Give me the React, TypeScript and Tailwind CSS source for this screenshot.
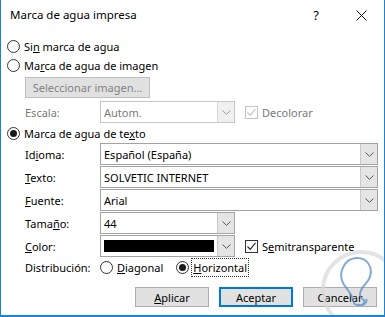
import type { ReactNode } from 'react';

const font = "font-['Noto_Sans',sans-serif]";

function Radio({ checked }: { checked?: boolean }) {
  return (
    <span className="flex h-[13px] w-[13px] shrink-0 items-center justify-center rounded-full border border-[#333] bg-white">
      {checked && <span className="h-[7px] w-[7px] rounded-full bg-[#1a1a1a]" />}
    </span>
  );
}

function Check({ disabled }: { disabled?: boolean }) {
  return (
    <span className={`flex h-[13px] w-[13px] shrink-0 items-center justify-center border bg-white ${disabled ? 'border-[#c4c4c4]' : 'border-[#333]'}`}>
      <svg width="11" height="11" viewBox="0 0 11 11">
        <path d="M1.5 5.5 L4.2 8.3 L9.5 1.8" fill="none" stroke={disabled ? '#c4c4c4' : '#222'} strokeWidth="1.1" />
      </svg>
    </span>
  );
}

function Chevron({ disabled }: { disabled?: boolean }) {
  return (
    <svg width="9" height="5" viewBox="0 0 9 5">
      <path d="M0.5 0.5 L4.5 4.3 L8.5 0.5" fill="none" stroke={disabled ? '#9a9a9a' : '#555'} strokeWidth="1" />
    </svg>
  );
}

function Combo({ w, disabled, children }: { w: string; disabled?: boolean; children: ReactNode }) {
  return (
    <div className={`flex h-[22px] shrink-0 border bg-white ${w} ${disabled ? 'border-[#c6c6c6] text-[#7a7a7a]' : 'border-[#a3a3a3]'}`}>
      <div className="flex min-w-0 flex-1 items-center px-[3px]">{children}</div>
      <div className={`flex w-[17px] items-center justify-center border-l ${disabled ? 'border-[#d6d6d6] bg-[#f0f0f0]' : 'border-[#c9c9c9] bg-[#e5e5e5]'}`}>
        <Chevron disabled={disabled} />
      </div>
    </div>
  );
}

function Field({ label, children }: { label: ReactNode; children: ReactNode }) {
  return (
    <div className="flex h-[22px] items-center pl-[24px]">
      <span className="w-[75px] shrink-0">{label}</span>
      {children}
    </div>
  );
}

function Btn({ children, primary }: { children: ReactNode; primary?: boolean }) {
  return (
    <button className={`flex h-[20px] w-[74px] items-center justify-center bg-[#e1e1e1] ${primary ? 'border-2 border-[#0078d7]' : 'border border-[#adadad]'}`}>
      {children}
    </button>
  );
}

export default function App() {
  return (
    <div className={`relative flex h-[317px] w-[385px] flex-col overflow-hidden border-x border-b-2 border-[#1883d7] bg-white text-[11px] leading-none text-black ${font}`}>
      {/* title bar */}
      <div className="flex h-[30px] shrink-0 items-center pl-[9px]">
        <span className="flex-1 text-[11.5px]">Marca de agua impresa</span>
        <span className="mr-[37px] text-[13px]">?</span>
        <svg className="mr-[17px]" width="11" height="11" viewBox="0 0 11 11">
          <path d="M0.5 0.5 L10.5 10.5 M10.5 0.5 L0.5 10.5" stroke="#111" strokeWidth="1" />
        </svg>
      </div>

      <div className="mt-[7px] flex h-[19px] items-center gap-[4px] pl-[6px]">
        <Radio />
        <span>Si<u>n</u> marca de agua</span>
      </div>
      <div className="flex h-[19px] items-center gap-[4px] pl-[6px]">
        <Radio />
        <span>Ma<u>r</u>ca de agua de imagen</span>
      </div>

      <div className="mt-[2px] pl-[24px]">
        <div className="flex h-[21px] w-[125px] items-center justify-center border border-[#bfbfbf] bg-[#e1e1e1] text-[#838383]">
          Seleccionar imagen...
        </div>
      </div>

      <div className="mt-[3px] flex h-[22px] items-center pl-[24px]">
        <span className="w-[75px] shrink-0 text-[#7a7a7a]">Escala:</span>
        <Combo w="w-[135px]" disabled>Autom.</Combo>
        <div className="ml-[10px] flex items-center gap-[4px] text-[#7a7a7a]">
          <Check disabled />
          <span>Decolorar</span>
        </div>
      </div>

      <div className="flex h-[20px] items-center gap-[4px] pl-[6px]">
        <Radio checked />
        <span>Marca de agua de te<u>x</u>to</span>
      </div>

      <div className="flex flex-col gap-[1px]">
        <Field label={<>Id<u>i</u>oma:</>}>
          <Combo w="w-[278px]">Español (España)</Combo>
        </Field>
        <Field label={<><u>T</u>exto:</>}>
          <Combo w="w-[278px]">SOLVETIC INTERNET</Combo>
        </Field>
        <Field label={<><u>F</u>uente:</>}>
          <Combo w="w-[278px]">Arial</Combo>
        </Field>
        <Field label={<>Tama<u>ñ</u>o:</>}>
          <Combo w="w-[135px]">44</Combo>
        </Field>
        <Field label={<><u>C</u>olor:</>}>
          <Combo w="w-[135px]">
            <span className="h-[12px] w-[110px] bg-black" />
          </Combo>
          <div className="ml-[10px] flex items-center gap-[4px]">
            <Check />
            <span>S<u>e</u>mitransparente</span>
          </div>
        </Field>
      </div>

      <div className="mt-[1px] flex h-[19px] items-center pl-[24px]">
        <span className="w-[75px] shrink-0">Distribución:</span>
        <Radio />
        <span className="ml-[4px]"><u>D</u>iagonal</span>
        <span className="ml-[13px]"><Radio checked /></span>
        <span className="ml-[2px] border border-dotted border-[#333] px-[1px] py-[3px]"><u>H</u>orizontal</span>
      </div>

      <div className="mt-[10px] flex justify-end gap-[10px] pr-[7px]">
        <Btn><span><u>A</u>plicar</span></Btn>
        <Btn primary>Aceptar</Btn>
        <Btn>Cancelar</Btn>
      </div>

      {/* site watermark */}
      <svg className="pointer-events-none absolute left-[315px] top-[245px]" width="80" height="80" viewBox="0 0 80 80">
        <circle cx="45" cy="45" r="38" fill="none" stroke="#d9d9d9" strokeWidth="4" opacity="0.7" />
        <path
          d="M37 56 C36 48 30 44 27 38 C22 28 28 14 40 13 C52 12 58 24 53 34 C50 40 44 42 44 50 C44 54 50 54 48 58 C45 62 36 60 38 56 M42 59 C46 62 52 58 50 54"
          fill="none"
          stroke="#5a8fcb"
          strokeWidth="2"
          opacity="0.75"
        />
      </svg>
    </div>
  );
}
